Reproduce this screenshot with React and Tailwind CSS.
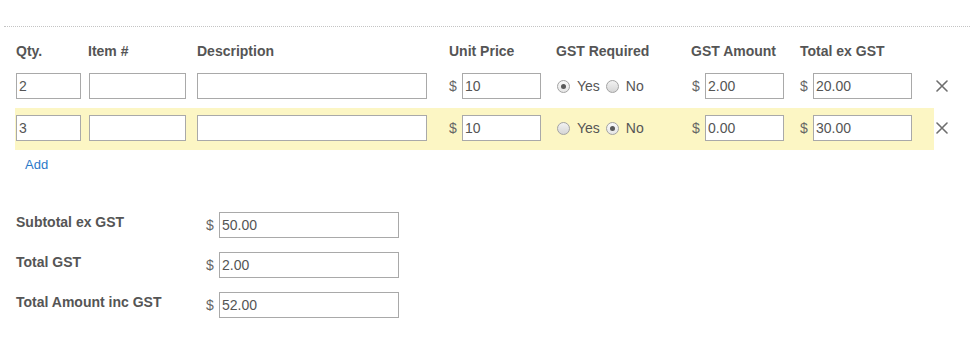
const rows = [
  { qty: '2', unit: '10', gst: true, gstAmount: '2.00', total: '20.00', highlight: false },
  { qty: '3', unit: '10', gst: false, gstAmount: '0.00', total: '30.00', highlight: true },
];

const totals = [
  { label: 'Subtotal ex GST', value: '50.00' },
  { label: 'Total GST', value: '2.00' },
  { label: 'Total Amount inc GST', value: '52.00' },
];

function Field({ value = '', width }) {
  return (
    <input
      readOnly
      value={value}
      className={`h-[26px] ${width} border border-[#a9a9a9] bg-white pl-[2px] text-[14px] text-[#555] outline-none`}
    />
  );
}

function Money({ value, width }) {
  return (
    <div className="flex items-center">
      <span className="w-[13px] text-[14px] text-[#666]">$</span>
      <Field value={value} width={width} />
    </div>
  );
}

function Radio({ checked, label }) {
  return (
    <div className="flex items-center">
      <span
        className={`flex h-[13px] w-[13px] items-center justify-center rounded-full border border-[#a3a3a3] ${
          checked ? 'bg-gradient-to-b from-[#fafafa] to-[#e6e6e6]' : 'bg-gradient-to-b from-[#f2f2f2] to-[#d6d6d6]'
        }`}
      >
        {checked && <span className="h-[5px] w-[5px] rounded-full bg-[#5a5a5a]" />}
      </span>
      <span className="ml-[7px] text-[14px] text-[#555]">{label}</span>
    </div>
  );
}

export default function App() {
  return (
    <div className="h-[340px] w-[970px] bg-white font-['Liberation_Sans',Arial,sans-serif]">
      <div className="ml-[4px] pt-[26px]">
        <div className="border-t border-dotted border-[#c4c4c4]" />
      </div>

      <div className="pl-[15px]">
        {/* Header */}
        <div className="flex h-[39px] pl-px pt-[14px] text-[14px] font-bold leading-[20px] text-[#555]">
          <div className="w-[72px] shrink-0">Qty.</div>
          <div className="w-[109px] shrink-0">Item #</div>
          <div className="w-[252px] shrink-0">Description</div>
          <div className="w-[107px] shrink-0">Unit Price</div>
          <div className="w-[135px] shrink-0">GST Required</div>
          <div className="w-[109px] shrink-0">GST Amount</div>
          <div className="w-[136px] shrink-0">Total ex GST</div>
        </div>

        {/* Line items */}
        {rows.map((row, i) => (
          <div
            key={i}
            className={`flex h-[42px] w-[919px] items-start pl-px pt-[7px] ${row.highlight ? 'bg-[#fcf6c4]' : ''}`}
          >
            <div className="w-[73px] shrink-0">
              <Field value={row.qty} width="w-[65px]" />
            </div>
            <div className="w-[108px] shrink-0">
              <Field width="w-[97px]" />
            </div>
            <div className="w-[252px] shrink-0">
              <Field width="w-[230px]" />
            </div>
            <div className="w-[108px] shrink-0">
              <Money value={row.unit} width="w-[79px]" />
            </div>
            <div className="flex h-[26px] w-[135px] shrink-0 items-center gap-[6px]">
              <Radio checked={row.gst} label="Yes" />
              <Radio checked={!row.gst} label="No" />
            </div>
            <div className="w-[108px] shrink-0">
              <Money value={row.gstAmount} width="w-[79px]" />
            </div>
            <div className="w-[136px] shrink-0">
              <Money value={row.total} width="w-[99px]" />
            </div>
            <div className="flex h-[26px] shrink-0 items-center">
              <svg width="12" height="12" viewBox="0 0 12 12" className="text-[#6e6e6e]">
                <path d="M1 1L11 11M11 1L1 11" stroke="currentColor" strokeWidth="1.6" strokeLinecap="round" />
              </svg>
            </div>
          </div>
        ))}

        <div className="pl-[10px] pt-[7px] text-[13px] leading-[16px] text-[#2a78c8]">Add</div>

        {/* Totals */}
        <div className="mt-[39px] flex flex-col gap-[14px] pl-px">
          {totals.map((t) => (
            <div key={t.label} className="flex items-start">
              <div className="w-[190px] text-[14px] font-bold leading-[20px] text-[#555]">{t.label}</div>
              <Money value={t.value} width="w-[180px]" />
            </div>
          ))}
        </div>
      </div>
    </div>
  );
}
